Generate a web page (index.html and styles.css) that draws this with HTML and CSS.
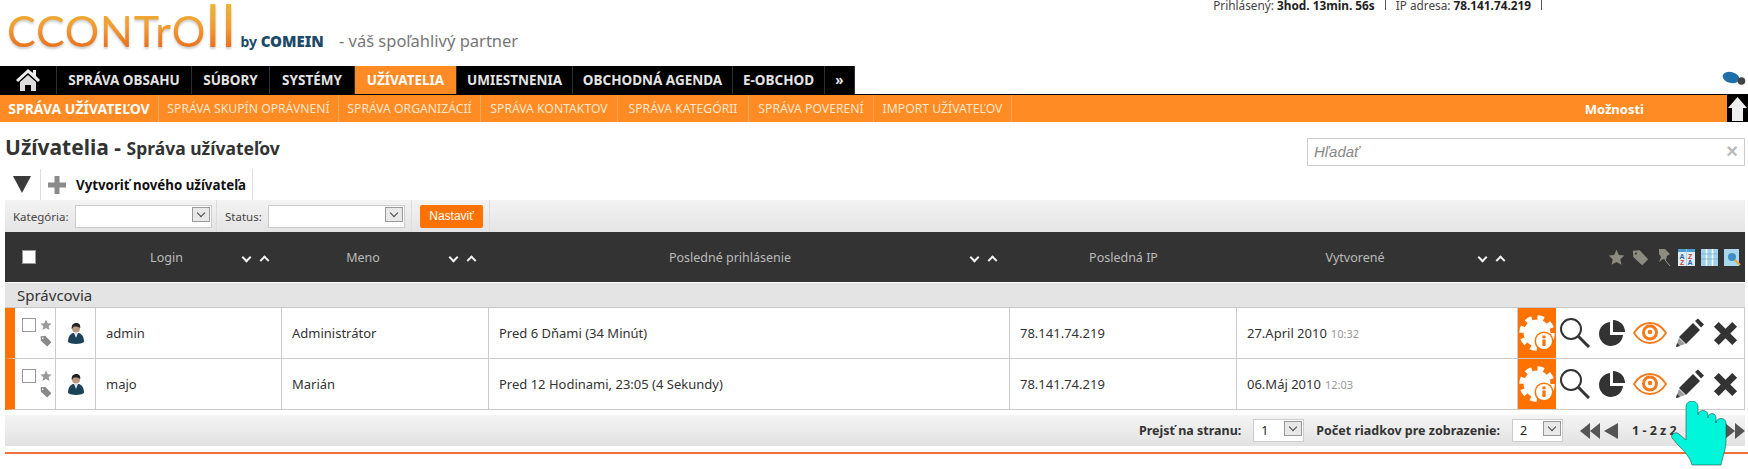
FILE: index.html
```html
<!DOCTYPE html>
<html lang="sk">
<head>
    <meta charset="UTF-8">
    <meta name="viewport" content="width=device-width, initial-scale=1.0">
    <title>Užívatelia - Správa užívateľov</title>
    <link rel="stylesheet" href="styles.css">
</head>
<body>

    <svg class="defs" width="0" height="0">
        <defs>
            <symbol id="i-star" viewBox="0 0 20 20"><path d="M10 1l2.800 6 6.400.7-4.800 4.300 1.400 6.500L10 15.200 4.200 18.500l1.400-6.500L.8 7.700 7.200 7z"/></symbol>
            <symbol id="i-tag" viewBox="0 0 20 20"><path d="M1 2l8-.5 10 10.500-7 7L1.500 9.500zM4.500 4a1.300 1.300 0 1 0 .1 0z" fill-rule="evenodd"/></symbol>
            <symbol id="i-user" viewBox="0 0 16 21">
                <path d="M0 19c0-5 2-8 5-9h6c3 1 5 4 5 9-3 2.500-13 2.500-16 0z" fill="#1c4258"/>
                <path d="M6 10l2 5 2-5z" fill="#dfe8ec"/>
                <circle cx="8" cy="5.500" r="4" fill="#b99a84"/>
                <path d="M3.800 6C3 1.500 6 0 8.500 0c3 0 4.200 2.500 3.700 5C11 3.500 7.500 3 5.500 3.800z" fill="#222"/>
            </symbol>
            <symbol id="i-gear" viewBox="0 0 38 50">
                <circle cx="19" cy="25" r="13.500" fill="#fff"/>
                <circle cx="19" cy="25" r="15.500" fill="none" stroke="#fff" stroke-width="4.500" stroke-dasharray="6.500 5.670"/>
                <circle cx="26" cy="33" r="9.500" fill="#ff7200"/>
                <circle cx="26" cy="33" r="8" fill="#fff"/>
                <rect x="24.400" y="31.500" width="3.200" height="6.500" fill="#ff7200"/>
                <rect x="24.400" y="27.500" width="3.200" height="2.800" fill="#ff7200"/>
            </symbol>
            <symbol id="i-search" viewBox="0 0 30 30">
                <circle cx="11" cy="11" r="10" fill="none" stroke="#333" stroke-width="2"/>
                <path d="M18.500 18.500L29 29" stroke="#333" stroke-width="3" fill="none"/>
            </symbol>
            <symbol id="i-pie" viewBox="0 0 28 28">
                <path d="M12 3a12 12 0 1 0 13 13H12z" fill="#333"/>
                <path d="M15 1a12 12 0 0 1 12 12H15z" fill="#333"/>
            </symbol>
            <symbol id="i-eye" viewBox="0 0 34 24">
                <path d="M1 12C6 4 12 2 17 2s11 2 16 10c-5 8-11 10-16 10S6 20 1 12z" fill="none" stroke="#f47a1c" stroke-width="1.800"/>
                <circle cx="17" cy="11.500" r="6.500" fill="none" stroke="#f47a1c" stroke-width="3"/>
                <circle cx="17" cy="11" r="2.300" fill="#f47a1c"/>
            </symbol>
            <symbol id="i-pencil" viewBox="0 0 30 30">
                <path d="M4 19L18 5l7 7L11 26z" fill="#333"/>
                <path d="M1 29l3-9 6 6z" fill="#999"/>
                <path d="M1 29l1-4 3 3z" fill="#333"/>
                <path d="M20 3l3-2.500 6 6-3 3z" fill="#333"/>
            </symbol>
            <symbol id="i-close" viewBox="0 0 28 28"><path d="M2 7l5-5 7 7 7-7 5 5-7 7 7 7-5 5-7-7-7 7-5-5 7-7z" fill="#333"/></symbol>
        </defs>
    </svg>

    <!-- Hlavička s logom -->
    <header class="top">
        <div class="logo">
            <span class="logo-word">CCONTr<span class="logo-o">O</span><span class="logo-ll">ll</span></span>
            <span class="logo-by">by <b>COMEIN</b></span>
            <span class="logo-claim">- váš spoľahlivý partner</span>
        </div>
        <div class="session">Prihlásený: <b>3hod. 13min. 56s</b><i></i>IP adresa: <b>78.141.74.219</b><i></i></div>
    </header>

    <!-- Hlavné menu -->
    <div class="nav-row">
        <nav class="nav">
            <a class="nav-home" href="#">
                <svg width="26" height="24" viewBox="0 0 26 24"><path d="M13 1L1 12l2 2L13 5l10 9 2-2-4-4V2h-3v3z" fill="#eee"/><path d="M5 14l8-7 8 7v9h-5v-6h-6v6H5z" fill="#ddd"/></svg>
            </a>
            <a href="#">SPRÁVA OBSAHU</a>
            <a href="#">SÚBORY</a>
            <a href="#">SYSTÉMY</a>
            <a class="active" href="#">UŽÍVATELIA</a>
            <a href="#">UMIESTNENIA</a>
            <a href="#">OBCHODNÁ AGENDA</a>
            <a href="#">E-OBCHOD</a>
            <a href="#">»</a>
        </nav>
        <svg class="nav-mouse" width="24" height="15" viewBox="0 0 24 15"><ellipse cx="9" cy="6.500" rx="8.500" ry="5.500" fill="#1f6fa8" transform="rotate(15 9 6.500)"/><circle cx="19.500" cy="10" r="3.800" fill="#444"/></svg>
    </div>

    <div class="subnav">
        <a class="current" href="#">SPRÁVA UŽÍVATEĽOV</a>
        <a href="#">SPRÁVA SKUPÍN OPRÁVNENÍ</a>
        <a href="#">SPRÁVA ORGANIZÁCIÍ</a>
        <a href="#">SPRÁVA KONTAKTOV</a>
        <a href="#">SPRÁVA KATEGÓRII</a>
        <a href="#">SPRÁVA POVERENÍ</a>
        <a href="#">IMPORT UŽÍVATEĽOV</a>
        <span class="options">Možnosti</span>
        <span class="collapse">
            <svg width="19" height="26" viewBox="0 0 19 26"><path d="M9.500 1L19 12h-4v13H4V12H0z" fill="#eee"/></svg>
        </span>
    </div>

    <main class="content">
        <div class="title-row">
            <h1>Užívatelia - <small>Správa užívateľov</small></h1>
            <div class="search"><em>Hľadať</em><span>×</span></div>
        </div>

        <div class="toolbar">
            <span class="tool-toggle"><svg width="18" height="17" viewBox="0 0 18 17"><path d="M0 0h18L9 17z" fill="#3a3a3a"/></svg></span>
            <span class="tool-new">
                <svg width="18" height="18" viewBox="0 0 18 18"><path d="M6.500 0h5v6.500H18v5h-6.500V18h-5v-6.500H0v-5h6.500z" fill="#8a8a8a"/></svg>
                Vytvoriť nového užívateľa
            </span>
        </div>

        <div class="filters">
            <div class="filter filter-cat"><label>Kategória:</label><div class="select"><span></span><b></b></div></div>
            <div class="filter filter-status"><label>Status:</label><div class="select"><span></span><b></b></div></div>
            <div class="filter filter-btn"><button type="button">Nastaviť</button></div>
        </div>

        <div class="head cols">
            <div class="head-check"><span class="box"></span></div>
            <div class="hcell shift"><span>Login</span><span class="sort"><i class="down"></i><i class="up"></i></span></div>
            <div class="hcell shift"><span>Meno</span><span class="sort"><i class="down"></i><i class="up"></i></span></div>
            <div class="hcell"><span>Posledné prihlásenie</span><span class="sort"><i class="down"></i><i class="up"></i></span></div>
            <div class="hcell"><span>Posledná IP</span></div>
            <div class="hcell shift"><span>Vytvorené</span><span class="sort"><i class="down"></i><i class="up"></i></span></div>
            <div class="head-icons">
                <svg width="17" height="17"><use href="#i-star" fill="#8c8c80"/></svg>
                <svg width="19" height="17"><use href="#i-tag" fill="#8c8c80"/></svg>
                <svg width="16" height="19" viewBox="0 0 16 19"><path d="M3 1h6l5 5-3 2-1 4-3-1-4 3 2-5-2-3z" fill="#8c8c80"/><path d="M9 12l5 6" stroke="#999" stroke-width="1"/></svg>
                <svg class="tile" width="17" height="17" viewBox="0 0 17 17"><rect width="17" height="17" fill="#dcedf6"/><rect width="17" height="3" fill="#4a9fd0"/><path d="M8.500 0v17" stroke="#9cc8e0" stroke-width=".8"/><text class="tile-a" x="1.500" y="9.500">A</text><text class="tile-z" x="10" y="9.500">Z</text><text class="tile-z" x="2" y="16">Z</text><text class="tile-a" x="9.500" y="16">A</text></svg>
                <svg class="tile" width="17" height="17" viewBox="0 0 17 17"><rect width="17" height="17" fill="#9fd3ec"/><path d="M5.500 0v17M11.500 0v17" stroke="#fff" stroke-width="1.500"/><path d="M0 5h17M0 10h17" stroke="#6fb6d8" stroke-width=".8"/></svg>
                <svg class="tile" width="17" height="17" viewBox="0 0 17 17"><rect width="15" height="17" fill="#a9d8ee"/><circle cx="8" cy="8" r="4" fill="#3f8fc4"/><path d="M11 11l5 5" stroke="#e8a93a" stroke-width="2"/></svg>
            </div>
        </div>

        <div class="group">Správcovia</div>

        <div class="row cols">
            <div class="cell-check"><span class="box"></span><span class="marks"><svg width="12" height="12"><use href="#i-star" fill="#999"/></svg><svg width="12" height="12"><use href="#i-tag" fill="#888"/></svg></span></div>
            <div class="cell-user"><svg width="16" height="21"><use href="#i-user"/></svg></div>
            <div class="cell">admin</div>
            <div class="cell">Administrátor</div>
            <div class="cell">Pred 6 Dňami (34 Minút)</div>
            <div class="cell">78.141.74.219</div>
            <div class="cell">27.April 2010 <small>10:32</small></div>
            <div class="actions">
                <span class="act-gear"><svg width="38" height="50"><use href="#i-gear"/></svg></span>
                <svg width="30" height="30"><use href="#i-search"/></svg>
                <svg width="28" height="28"><use href="#i-pie"/></svg>
                <svg width="34" height="24"><use href="#i-eye"/></svg>
                <svg width="30" height="30"><use href="#i-pencil"/></svg>
                <svg width="27" height="27"><use href="#i-close"/></svg>
            </div>
        </div>

        <div class="row cols">
            <div class="cell-check"><span class="box"></span><span class="marks"><svg width="12" height="12"><use href="#i-star" fill="#999"/></svg><svg width="12" height="12"><use href="#i-tag" fill="#888"/></svg></span></div>
            <div class="cell-user"><svg width="16" height="21"><use href="#i-user"/></svg></div>
            <div class="cell">majo</div>
            <div class="cell">Marián</div>
            <div class="cell">Pred 12 Hodinami, 23:05 (4 Sekundy)</div>
            <div class="cell">78.141.74.219</div>
            <div class="cell">06.Máj 2010 <small>12:03</small></div>
            <div class="actions">
                <span class="act-gear"><svg width="38" height="50"><use href="#i-gear"/></svg></span>
                <svg width="30" height="30"><use href="#i-search"/></svg>
                <svg width="28" height="28"><use href="#i-pie"/></svg>
                <svg width="34" height="24"><use href="#i-eye"/></svg>
                <svg width="30" height="30"><use href="#i-pencil"/></svg>
                <svg width="27" height="27"><use href="#i-close"/></svg>
            </div>
        </div>

        <div class="pager">
            <b>Prejsť na stranu:</b>
            <div class="select select-small"><span>1</span><b></b></div>
            <b>Počet riadkov pre zobrazenie:</b>
            <div class="select select-small select-last"><span>2</span><b></b></div>
            <svg class="pager-arrows" width="40" height="16" viewBox="0 0 40 16"><path d="M0 8l10-8v16zM10 8l10-8v16zM24 8L38 0v16z" fill="#555"/></svg>
            <b class="pager-count">1 - 2 z 2</b>
            <svg class="pager-arrows" width="40" height="16" viewBox="0 0 40 16"><path d="M0 0l14 8-14 8zM20 0l10 8-10 8zM30 0l10 8-10 8z" fill="#555"/></svg>
        </div>

        <div class="bottom-line"></div>
    </main>

    <!-- Kurzor ruky cez stránku -->
    <svg class="hand" width="58" height="66" viewBox="0 0 58 66">
        <path d="M16 6C16-2 28-2 28 6v8c0-6 10-6 10 0v3c0-6 8-6 8 0v5c0-6 10-6 10 0v18c0 8-3 14-5 24H22c-2-8-8-14-14-20l-6-7c-2-4 4-7 7-4l7 6z" fill="#00f6da" stroke="#2a4a48" stroke-width=".6"/>
    </svg>

</body>
</html>
```

FILE: styles.css
```css
/* Základ stránky */
body {
    margin: 0;
    background-color: #fff;
    color: #333;
    font-family: "Noto Sans", "DejaVu Sans", sans-serif;
    font-size: 13px;
    height: 469px;
    overflow: hidden;
    position: relative;
}

a {
    text-decoration: none;
    color: inherit;
}

.defs {
    position: absolute;
}

/* Hlavička */
.top {
    display: flex;
    justify-content: space-between;
    height: 66px;
}

.logo {
    display: flex;
    align-items: baseline;
    height: 66px;
    margin-top: -5px;
    padding-left: 7px;
    box-sizing: border-box;
}

.logo-word {
    display: inline-block;
    font-family: "Lato", sans-serif;
    font-size: 43px;
    line-height: 60px;
    letter-spacing: 0.8px;
    background: linear-gradient(#e9b535 15%, #f29a30 50%, #e8681c 85%);
    -webkit-background-clip: text;
    background-clip: text;
    color: transparent;
    filter: drop-shadow(0 2px 1px rgba(0, 0, 0, 0.2));
}

.logo-o {
    font-size: 42px;
}

.logo-ll {
    font-size: 58px;
    line-height: 60px;
    font-weight: 400;
    letter-spacing: 2px;
}

.logo-by {
    margin-left: 3px;
    font-size: 14px;
    font-weight: 700;
    color: #1d4a68;
}

.logo-by b {
    font-size: 15px;
}

.logo-claim {
    margin-left: 15px;
    font-size: 16.500px;
    color: #777;
}

.session {
    margin-right: 196px;
    font-size: 11.800px;
    line-height: 11px;
    color: #444;
}

.session b {
    color: #222;
}

.session i {
    display: inline-block;
    width: 1px;
    height: 10px;
    margin: 0 10px;
    background-color: #555;
}

/* Hlavné menu */
.nav-row {
    display: flex;
    justify-content: space-between;
    align-items: flex-start;
    height: 28px;
    border-bottom: 1px solid #000;
}

.nav {
    display: grid;
    grid-template-columns: 57px 135px 78px 85px 102px 116px 160px 92px 30px;
    height: 28px;
    background-color: #000;
}

.nav a {
    display: flex;
    align-items: center;
    justify-content: center;
    color: #e4e4e4;
    font-size: 13.500px;
    font-weight: 700;
    border-right: 1px solid #26313a;
    box-sizing: border-box;
    white-space: nowrap;
}

.nav a.active {
    background-color: #ff8b25;
    color: #fff;
}

.nav-mouse {
    margin: 5px 2px 0 0;
}

.subnav {
    display: flex;
    align-items: center;
    height: 27px;
    background-color: #ff8b25;
    color: #ffe6cc;
    font-size: 12.200px;
}

.subnav a {
    display: flex;
    align-items: center;
    justify-content: center;
    height: 100%;
    border-right: 1px solid #ffa95c;
    box-sizing: border-box;
    white-space: nowrap;
}

.subnav a:nth-child(1) { width: 159px; font-weight: 700; font-size: 14px; color: #fff; }
.subnav a:nth-child(2) { width: 180px; }
.subnav a:nth-child(3) { width: 142px; }
.subnav a:nth-child(4) { width: 137px; }
.subnav a:nth-child(5) { width: 131px; }
.subnav a:nth-child(6) { width: 125px; }
.subnav a:nth-child(7) { width: 138px; }

.options {
    margin-left: auto;
    margin-right: 83px;
    color: #fff;
    font-weight: 700;
    font-size: 13px;
}

.collapse {
    display: flex;
    align-items: center;
    justify-content: center;
    width: 21px;
    height: 100%;
    background-color: #000;
}

/* Obsah */
.content {
    padding: 0 3px 0 5px;
}

.title-row {
    display: flex;
    justify-content: space-between;
    align-items: center;
    height: 47px;
    padding-top: 2px;
    box-sizing: border-box;
}

h1 {
    margin: 0;
    font-size: 21px;
    font-weight: 700;
    color: #333;
}

h1 small {
    font-size: 17.500px;
}

.search {
    display: flex;
    align-items: center;
    justify-content: space-between;
    width: 438px;
    height: 28px;
    margin-top: 10px;
    padding: 0 6px;
    border: 1px solid #ccc;
    box-sizing: border-box;
    color: #888;
    font-family: "Liberation Sans", sans-serif;
    font-size: 15px;
}

.search span {
    color: #bbb;
    font-size: 20px;
    font-weight: 700;
}

.toolbar {
    display: flex;
    height: 31px;
}

.tool-toggle {
    display: flex;
    align-items: center;
    padding: 0 9px 0 8px;
    border-right: 1px solid #ddd;
}

.tool-new {
    display: flex;
    align-items: center;
    gap: 10px;
    padding: 0 6px 0 7px;
    border-right: 1px solid #ddd;
    font-weight: 700;
    font-size: 13.300px;
    color: #111;
}

.filters {
    display: flex;
    height: 32px;
    background: linear-gradient(#f3f3f3, #e4e4e4);
}

.filter {
    display: flex;
    align-items: center;
    gap: 6px;
    border-right: 1px solid #ddd;
    box-sizing: border-box;
    padding-left: 8px;
    color: #444;
    font-size: 11.500px;
}

.filter-cat { width: 212px; }
.filter-status { width: 195px; }
.filter-btn { width: 78px; }

.select {
    position: relative;
    display: flex;
    align-items: center;
    width: 137px;
    height: 23px;
    box-sizing: border-box;
    background-color: #fff;
    border: 1px solid #ccc;
}

.select > span {
    padding-left: 7px;
    color: #222;
}

.select > b {
    position: absolute;
    right: 1px;
    top: 1px;
    width: 18px;
    height: 15px;
    background-color: #e8e8e8;
    border: 1px solid #999;
    box-sizing: border-box;
}

.select > b::after {
    content: "";
    position: absolute;
    left: 5px;
    top: 2px;
    width: 5px;
    height: 5px;
    border-right: 1px solid #444;
    border-bottom: 1px solid #444;
    transform: rotate(45deg);
}

.select-small {
    width: 51px;
}

button {
    width: 63px;
    height: 23px;
    padding: 0;
    background-color: #ff7200;
    color: #fff;
    border: none;
    border-radius: 2px;
    font-family: "Liberation Sans", sans-serif;
    font-size: 12px;
}

/* Tabuľka */
.cols {
    display: grid;
    grid-template-columns: 91px 186px 207px 521px 227px 281px 1fr;
}

.head {
    height: 50px;
    background-color: #333;
    color: #bbb;
}

.head-check {
    display: flex;
    align-items: center;
    padding-left: 17px;
}

.box {
    display: block;
    width: 14px;
    height: 14px;
    background-color: #fff;
    border: 1px solid #999;
    box-sizing: border-box;
}

.hcell {
    display: flex;
    align-items: center;
    font-size: 12.500px;
}

.hcell > span:first-child {
    flex: 1;
    text-align: center;
}

.hcell.shift > span:first-child {
    padding-right: 6px;
}

.sort {
    display: flex;
    gap: 11px;
    margin-right: 14px;
}

.sort i {
    display: block;
    width: 7px;
    height: 7px;
    border-right: 2px solid #f2f2f2;
    border-bottom: 2px solid #f2f2f2;
    box-sizing: border-box;
}

.sort .down {
    transform: rotate(45deg);
}

.sort .up {
    transform: rotate(-135deg) translate(-2px, -2px);
}

.head-icons {
    display: flex;
    align-items: center;
    gap: 6px;
    justify-content: flex-end;
    padding-right: 4px;
}

.tile text {
    font-family: "Liberation Sans", sans-serif;
    font-size: 7px;
    font-weight: 700;
}

.tile-a {
    fill: #2a5fa8;
}

.tile-z {
    fill: #c8403a;
}

.group {
    height: 26px;
    line-height: 25px;
    padding-left: 12px;
    box-sizing: border-box;
    background-color: #e4e4e4;
    border-top: 1px solid #fff;
    border-bottom: 1px solid #c8c8c8;
    font-size: 15px;
    color: #333;
}

.row {
    height: 51px;
    border-left: 10px solid #ff7200;
    border-bottom: 1px solid #ccc;
    border-right: 1px solid #ccc;
    box-sizing: border-box;
    grid-template-columns: 41px 40px 186px 207px 521px 227px 281px 1fr;
}

.row > div {
    border-right: 1px solid #ccc;
    box-sizing: border-box;
}

.cell-check {
    display: flex;
    gap: 4px;
    padding: 10px 0 0 7px;
}

.cell-check .box {
    background-color: #fff;
    border-color: #999;
}

.marks {
    display: flex;
    flex-direction: column;
    gap: 4px;
    margin-top: 1px;
}

.cell-user {
    display: flex;
    align-items: center;
    justify-content: center;
}

.cell {
    display: flex;
    align-items: center;
    gap: 4px;
    padding-left: 10px;
    font-size: 13px;
    color: #333;
}

.cell small {
    font-size: 11px;
    color: #999;
}

.row > .actions {
    display: flex;
    align-items: center;
    border-right: none;
}

.act-gear {
    display: flex;
    height: 50px;
    margin-right: 4px;
    background-color: #ff7200;
}

.actions svg + svg {
    margin-left: 7.500px;
}

/* Stránkovanie */
.pager {
    display: flex;
    align-items: center;
    justify-content: flex-end;
    gap: 12px;
    height: 31px;
    margin-top: 5px;
    padding-right: 0;
    background: linear-gradient(#f4f4f4, #e2e2e2);
    color: #333;
    font-size: 12.500px;
}

.pager .select > b {
    height: 15px;
}

.select-last {
    margin-right: 5px;
}

.pager-count {
    min-width: 61px;
    font-weight: 700;
}

.bottom-line {
    height: 2px;
    margin: 6px -3px 0 0;
    background-color: #f0703c;
}

/* Kurzor cez obsah */
.hand {
    position: absolute;
    left: 1670px;
    top: 401px;
}
```
